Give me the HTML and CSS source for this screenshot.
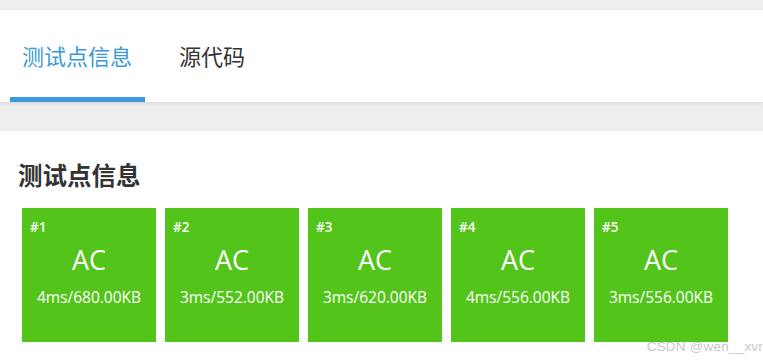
FILE: index.html
```html
<!DOCTYPE html>
<html lang="zh">
<head>
    <meta charset="UTF-8">
    <title>测试点信息</title>
    <link rel="stylesheet" href="styles.css">
</head>
<body>
    <div class="tabs">
        <div class="tab active">测试点信息</div>
        <div class="tab">源代码</div>
    </div>
    <div class="spacer"></div>
    <section class="panel">
        <h2>测试点信息</h2>
        <div class="cases">
            <div class="case"><span class="num">#1</span><span class="status">AC</span><span class="usage">4ms/680.00KB</span></div>
            <div class="case"><span class="num">#2</span><span class="status">AC</span><span class="usage">3ms/552.00KB</span></div>
            <div class="case"><span class="num">#3</span><span class="status">AC</span><span class="usage">3ms/620.00KB</span></div>
            <div class="case"><span class="num">#4</span><span class="status">AC</span><span class="usage">4ms/556.00KB</span></div>
            <div class="case"><span class="num">#5</span><span class="status">AC</span><span class="usage">3ms/556.00KB</span></div>
        </div>
        <div class="watermark">CSDN @wen__xvr</div>
    </section>
</body>
</html>
```

FILE: styles.css
```css
body {
    margin: 0;
    padding-top: 10px;
    background: #eeeeee;
    font-family: "Open Sans", "Noto Sans CJK SC", sans-serif;
    color: #333;
    height: 350px;
    overflow: hidden;
}

.tabs {
    display: flex;
    background: #fff;
    padding-left: 10px;
    height: 92px;
    box-shadow: 0 1px 3px rgba(0, 0, 0, 0.12);
    position: relative;
}

.tab {
    font-family: "Noto Sans CJK SC", sans-serif;
    font-size: 22px;
    padding: 0 12px;
    line-height: 90px;
    height: 87px;
    color: #333;
}

.tab + .tab {
    margin-left: 22px;
}

.tab.active {
    color: #3a9ad9;
    border-bottom: 5px solid #3a9ad9;
    width: 111px;
}

.spacer {
    height: 29px;
}

.panel {
    background: #fff;
    padding: 26px 18px 0;
    height: 203px;
    position: relative;
}

h2 {
    margin: 0 0 16px;
    font-family: "Noto Sans CJK SC", sans-serif;
    font-size: 24.5px;
    line-height: 35px;
    color: #333;
    font-weight: bold;
}

.cases {
    display: flex;
    gap: 9px;
    padding-left: 4px;
}

.case {
    width: 134px;
    height: 134px;
    background: #52c41a;
    color: #fff;
    display: flex;
    flex-direction: column;
    align-items: center;
}

.case .num {
    align-self: flex-start;
    font-size: 13.5px;
    font-weight: 600;
    margin: 11px 0 0 8px;
    line-height: 16px;
}

.case .status {
    font-size: 27px;
    line-height: 30px;
    margin-top: 10px;
}

.case .usage {
    font-size: 15.5px;
    line-height: 20px;
    margin-top: 12px;
}

.watermark {
    position: absolute;
    right: 0;
    top: 208px;
    font-family: "Liberation Sans", sans-serif;
    font-size: 13.5px;
    color: #c8c8c8;
    letter-spacing: 0.2px;
}
```
